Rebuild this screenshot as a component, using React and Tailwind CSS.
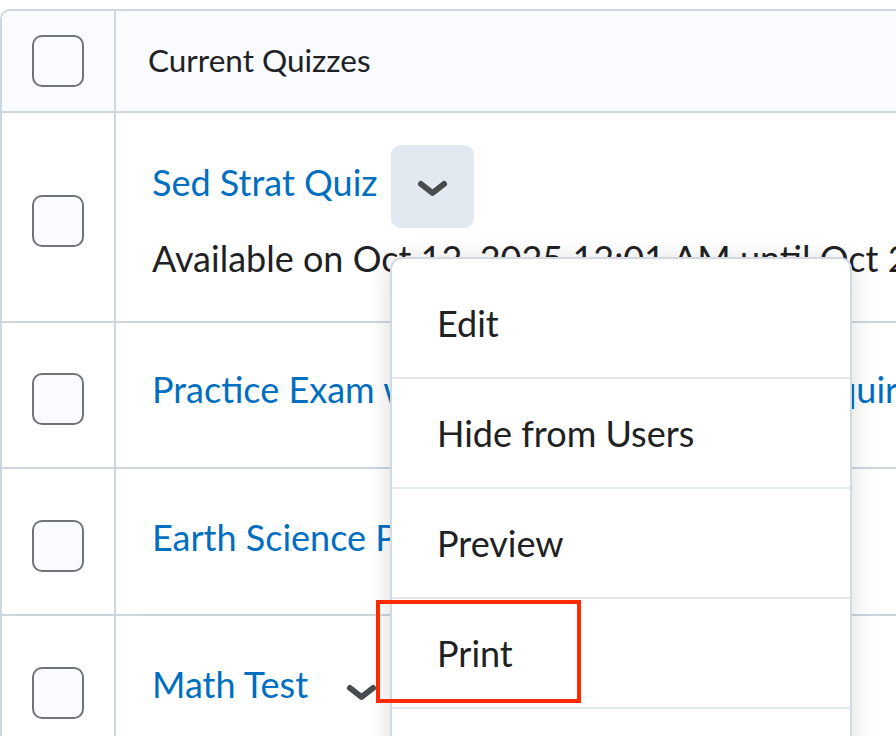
const ChevronDown = ({ className = "" }) => (
  <svg viewBox="0 0 31 17" width="31" height="17" className={className} aria-hidden="true">
    <polyline
      points="4,4 15.5,13 27,4"
      fill="none"
      stroke="#494c4e"
      strokeWidth="6"
      strokeLinecap="round"
      strokeLinejoin="round"
    />
  </svg>
);

const Checkbox = () => (
  <div className="h-[52px] w-[52px] rounded-[10px] border-2 border-[#6e7477] bg-[#f9fbff]" />
);

const menuItems = ["Edit", "Hide from Users", "Preview", "Print", "Delete"];

export default function App() {
  return (
    <div className="relative h-[736px] w-[896px] overflow-hidden bg-white font-['Lato',sans-serif] text-[#202122]">
      {/* quiz table */}
      <div className="mt-[9px] w-[1000px] rounded-tl-[10px] border-l-2 border-t-2 border-[#cdd5de]">
        {/* header */}
        <div className="flex h-[102px] rounded-tl-[8px] border-b-2 border-[#cdd5de] bg-[#f9fbff]">
          <div className="flex w-[114px] shrink-0 items-center justify-center border-r-2 border-[#cdd5de]">
            <Checkbox />
          </div>
          <div className="flex items-center pl-[32px] text-[31.5px]">Current Quizzes</div>
        </div>

        {/* row 1 */}
        <div className="flex h-[210px] border-b-2 border-[#cdd5de]">
          <div className="flex w-[114px] shrink-0 justify-center border-r-2 border-[#cdd5de] pt-[82px]">
            <Checkbox />
          </div>
          <div className="pl-[36px] pt-[32px]">
            <div className="flex items-start">
              <a className="mt-[16px] text-[36px] leading-[43px] text-[#006fbf]">Sed Strat Quiz</a>
              <button className="ml-[13px] flex h-[83px] w-[83px] items-center justify-center rounded-[10px] bg-[#e3e9f1] pt-[3px]">
                <ChevronDown />
              </button>
            </div>
            <p className="mt-[9px] whitespace-nowrap text-[36px] leading-[43px]">
              Available on Oct 12, 2025 12:01 AM until Oct 26, 2025 11:59 PM
            </p>
          </div>
        </div>

        {/* row 2 */}
        <div className="flex h-[146px] border-b-2 border-[#cdd5de]">
          <div className="flex w-[114px] shrink-0 justify-center border-r-2 border-[#cdd5de] pt-[50px]">
            <Checkbox />
          </div>
          <div className="pl-[36px] pt-[45px]">
            <a className="whitespace-nowrap text-[36px] leading-[43px] text-[#006fbf]">
              Practice Exam with an Instructor Review Required
            </a>
          </div>
        </div>

        {/* row 3 */}
        <div className="flex h-[147px] border-b-2 border-[#cdd5de]">
          <div className="flex w-[114px] shrink-0 justify-center border-r-2 border-[#cdd5de] pt-[51px]">
            <Checkbox />
          </div>
          <div className="pl-[36px] pt-[47px]">
            <a className="whitespace-nowrap text-[36px] leading-[43px] text-[#006fbf]">Earth Science Practice Quiz</a>
          </div>
        </div>

        {/* row 4 */}
        <div className="flex h-[200px]">
          <div className="flex w-[114px] shrink-0 justify-center border-r-2 border-[#cdd5de] pt-[51px]">
            <Checkbox />
          </div>
          <div className="flex items-start pl-[36px] pt-[47px]">
            <a className="whitespace-nowrap text-[36px] leading-[43px] text-[#006fbf]">Math Test</a>
            <ChevronDown className="ml-[38px] mt-[21px]" />
          </div>
        </div>
      </div>

      {/* context menu */}
      <div className="absolute left-[390px] top-[257px] h-[560px] w-[462px] rounded-[12px] border-2 border-[#d3d9e3] bg-white pt-[10px] shadow-[0_4px_24px_rgba(0,0,0,0.15)]">
        {menuItems.map((item) => (
          <div
            key={item}
            className="flex h-[110px] items-center border-b-2 border-[#e3e9f1] pl-[45px] text-[36px] leading-[43px]"
          >
            {item}
          </div>
        ))}
      </div>

      {/* annotation */}
      <div className="absolute left-[376px] top-[600px] h-[103px] w-[205px] border-4 border-[#ff2a00]" />
    </div>
  );
}
